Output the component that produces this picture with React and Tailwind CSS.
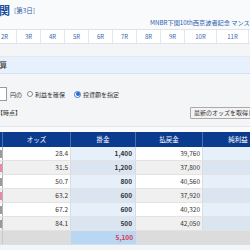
import React from 'react';

const races = [
    { label: '2R', w: 'w-[24px]' },
    { label: '3R', w: 'w-[24px]' },
    { label: '4R', w: 'w-[24px]' },
    { label: '5R', w: 'w-[24px]' },
    { label: '6R', w: 'w-[24px]' },
    { label: '7R', w: 'w-[24px]' },
    { label: '8R', w: 'w-[24px]' },
    { label: '9R', w: 'w-[24px]' },
    { label: '10R', w: 'w-[32px]' },
    { label: '11R', w: 'w-[32px]' },
];

const rows = [
    { odds: '28.4', stake: '1,400', payout: '39,760', tag: 'bg-[#9a9a9a]' },
    { odds: '31.5', stake: '1,200', payout: '37,800', tag: 'bg-[#e88aa6]' },
    { odds: '50.7', stake: '800', payout: '40,560', tag: 'bg-[#9a9a9a]' },
    { odds: '63.2', stake: '600', payout: '37,920', tag: 'bg-[#e88aa6]' },
    { odds: '67.2', stake: '600', payout: '40,320', tag: 'bg-[#9a9a9a]' },
    { odds: '84.1', stake: '500', payout: '42,050', tag: 'bg-[#9a9a9a]' },
];

const App = () => {
    return (
        <div className="w-[250px] h-[250px] overflow-hidden bg-[#f4f5f7] font-['Noto_Sans_CJK_JP',sans-serif] text-[#333]">
            {/* page title */}
            <div className="h-[29px] bg-[#f9fafc]">
                <div className="flex items-center h-[18px] pt-[2px] ml-[-1px]">
                    <span className="text-[11px] font-bold leading-[14px] text-[#1d4e9e]">関</span>
                    <span className="ml-[4px] text-[6.5px] leading-[8px] text-[#2c5aa8]">[第3日]</span>
                </div>
                <div className="pl-[150px] whitespace-nowrap text-[6.2px] leading-[9px] text-[#2a5db0]">
                    MNBR下関10th西京波者記念 マンスリー
                </div>
            </div>

            {/* race tabs */}
            <div className="flex h-[15px] bg-white border-y border-[#dfe3ea] ml-[-7px] whitespace-nowrap">
                {races.map((r) => (
                    <div key={r.label} className={`${r.w} shrink-0 flex items-center justify-center border-r border-[#e4e7ed] text-[6px] text-[#3b67ad]`}>
                        {r.label}
                    </div>
                ))}
            </div>

            <div className="h-[13px] border-b border-[#e6e8ec]"></div>

            {/* section bar */}
            <div className="h-[17px] flex items-center bg-[#e7f1fd] border-b border-[#d6dfeb] overflow-hidden">
                <span className="ml-[-8px] text-[7.5px] whitespace-nowrap text-[#333]">計算</span>
            </div>

            {/* form */}
            <div className="pt-[13px]">
                <div className="flex items-center h-[14px] whitespace-nowrap text-[6px]">
                    <div className="w-[27px] h-[14px] ml-[-20px] shrink-0 bg-white border border-[#9a9a9a]"></div>
                    <span className="ml-[3px]">円の</span>
                    <span className="ml-[5px] w-[6px] h-[6px] shrink-0 rounded-full border border-[#8a8a8a] bg-white"></span>
                    <span className="ml-[2px]">利益を確保</span>
                    <span className="ml-[9px] w-[7px] h-[7px] shrink-0 rounded-full border border-[#3b78d8] bg-white flex items-center justify-center">
                        <span className="w-[4px] h-[4px] rounded-full bg-[#2a66cc]"></span>
                    </span>
                    <span className="ml-[2px]">投資額を指定</span>
                </div>
                <div className="flex items-center justify-between h-[13px] mt-[5px] whitespace-nowrap">
                    <span className="ml-[-3px] text-[6px]">【時点】</span>
                    <div className="w-[64px] h-[12px] mr-[-4px] shrink-0 flex items-center pl-[3px] overflow-hidden bg-[#f3f3f3] border border-[#a9a9a9] rounded-[1px] text-[6px] text-[#333]">
                        最新のオッズを取得して計算
                    </div>
                </div>
            </div>

            {/* table */}
            <div className="mt-[7px] pt-[5px] bg-[#fafafa] border-t border-[#e4e6ea]">
                <div className="flex h-[15px] bg-[#0b3b8e] text-white text-[6.5px] whitespace-nowrap">
                    <div className="w-[3px] shrink-0 border-r border-[#4b6fae]"></div>
                    <div className="w-[68px] shrink-0 flex items-center justify-center border-r border-[#4b6fae]">オッズ</div>
                    <div className="w-[65px] shrink-0 flex items-center justify-center border-r border-[#4b6fae]">掛金</div>
                    <div className="w-[67px] shrink-0 flex items-center justify-center border-r border-[#4b6fae]">払戻金</div>
                    <div className="w-[70px] shrink-0 flex items-center justify-center">純利益</div>
                </div>
                {rows.map((row, i) => {
                    const even = i % 2 === 1;
                    return (
                        <div key={i} className="flex h-[14px] text-[6.5px] text-[#333] border-b border-[#e3e3e3] whitespace-nowrap">
                            <div className={`w-[3px] shrink-0 flex items-center border-r border-[#b5b5b5] ${even ? 'bg-[#f0f0f0]' : 'bg-white'}`}>
                                <span className={`w-[2px] h-[8px] ${row.tag}`}></span>
                            </div>
                            <div className={`w-[68px] shrink-0 flex items-center justify-end pr-[2px] border-r border-[#dcdcdc] ${even ? 'bg-[#f0f0f0]' : 'bg-white'}`}>{row.odds}</div>
                            <div className={`w-[65px] shrink-0 flex items-center justify-end pr-[3px] font-bold border-r border-[#d3dde8] ${even ? 'bg-[#dae5f1]' : 'bg-[#e6f0fb]'}`}>{row.stake}</div>
                            <div className={`w-[67px] shrink-0 flex items-center justify-end pr-[2px] border-r border-[#dcdcdc] ${even ? 'bg-[#f0f0f0]' : 'bg-white'}`}>{row.payout}</div>
                            <div className={`w-[70px] shrink-0 ${even ? 'bg-[#dae5f1]' : 'bg-[#e6f0fb]'}`}></div>
                        </div>
                    );
                })}
                <div className="flex h-[14px] text-[6.5px] whitespace-nowrap border-b border-[#cfe0f2]">
                    <div className="w-[3px] shrink-0 bg-[#dcdcdc] border-r border-[#c8c8c8]"></div>
                    <div className="w-[68px] shrink-0 bg-[#dcdcdc]"></div>
                    <div className="w-[65px] shrink-0 flex items-center justify-end pr-[3px] font-bold text-[#e0324a] bg-[#b9d7f3]">5,100</div>
                    <div className="w-[67px] shrink-0 bg-[#dcdcdc]"></div>
                    <div className="w-[70px] shrink-0 bg-[#dcdcdc]"></div>
                </div>
            </div>
        </div>
    );
};

export default App;
